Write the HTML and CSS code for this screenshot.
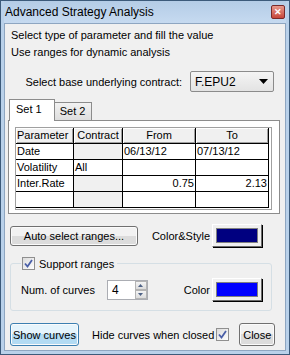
FILE: index.html
```html
<!DOCTYPE html>
<html lang="en">
<head>
    <meta charset="UTF-8">
    <title>Advanced Strategy Analysis</title>
    <link rel="stylesheet" href="styles.css">
</head>
<body>
    <div class="window">
        <div class="titlebar">
            <span class="title">Advanced Strategy Analysis</span>
            <span class="close-x">&#10005;</span>
        </div>
        <div class="client">
            <p class="intro">Select type of parameter and fill the value<br>Use ranges for dynamic analysis</p>
            <div class="contract-row">
                <span>Select base underlying contract:</span>
                <div class="combo">
                    <span>F.EPU2</span>
                    <svg width="9" height="5" viewBox="0 0 9 5"><path d="M0 0h9L4.5 5z" fill="#000"/></svg>
                </div>
            </div>
            <div class="tabs">
                <div class="tab active">Set 1</div>
                <div class="tab">Set 2</div>
            </div>
            <div class="tabpanel">
                <div class="grid-box">
                    <table class="grid">
                        <tr>
                            <th class="c1">Parameter</th>
                            <th class="c2">Contract</th>
                            <th class="c3">From</th>
                            <th class="c4">To</th>
                        </tr>
                        <tr>
                            <td>Date</td>
                            <td class="off"></td>
                            <td>06/13/12</td>
                            <td>07/13/12</td>
                        </tr>
                        <tr>
                            <td>Volatility</td>
                            <td>All</td>
                            <td></td>
                            <td></td>
                        </tr>
                        <tr>
                            <td>Inter.Rate</td>
                            <td class="off"></td>
                            <td class="num">0.75</td>
                            <td class="num">2.13</td>
                        </tr>
                        <tr>
                            <td></td>
                            <td class="off"></td>
                            <td></td>
                            <td></td>
                        </tr>
                    </table>
                </div>
            </div>
            <div class="ranges-row">
                <button class="btn auto-btn">Auto select ranges...</button>
                <span class="lbl">Color&amp;Style</span>
                <div class="swatch-btn"><div class="swatch navy"></div></div>
            </div>
            <div class="group">
                <div class="legend">
                    <span class="check"><svg width="9" height="9" viewBox="0 0 9 9"><path d="M1 4.5l2.5 3L8 1" stroke="#4a5fa8" stroke-width="1.8" fill="none"/></svg></span>
                    <span>Support ranges</span>
                </div>
                <div class="group-row">
                    <span class="lbl">Num. of curves</span>
                    <div class="spin">
                        <span class="spin-val">4</span>
                        <div class="spin-btns">
                            <div class="spin-b"><svg width="5" height="3" viewBox="0 0 5 3"><path d="M0 3h5L2.5 0z" fill="#4d6185"/></svg></div>
                            <div class="spin-b"><svg width="5" height="3" viewBox="0 0 5 3"><path d="M0 0h5L2.5 3z" fill="#4d6185"/></svg></div>
                        </div>
                    </div>
                    <span class="lbl color-lbl">Color</span>
                    <div class="swatch-btn"><div class="swatch blue"></div></div>
                </div>
            </div>
            <div class="footer">
                <button class="btn show-btn">Show curves</button>
                <span class="lbl hide-lbl">Hide curves when closed</span>
                <span class="check small"><svg width="9" height="9" viewBox="0 0 9 9"><path d="M1 4.5l2.5 3L8 1" stroke="#4a5fa8" stroke-width="1.8" fill="none"/></svg></span>
                <button class="btn close-btn">Close</button>
            </div>
        </div>
    </div>
</body>
</html>
```
FILE: styles.css
```css
body {
    margin: 0;
    padding: 0;
    background-color: #ffffff;
    font-family: "Liberation Sans", Arial, sans-serif;
    font-size: 11px;
    color: #000;
}
.window {
    width: 290px;
    height: 355px;
    box-sizing: border-box;
    border: 1px solid #3c5a7a;
    background-color: #b9d1ea;
    padding: 0 3px 3px 3px;
    display: flex;
    flex-direction: column;
}
.titlebar {
    height: 22px;
    display: flex;
    align-items: center;
    justify-content: space-between;
    padding: 0 1px 0 1px;
    background: linear-gradient(#b4cce6, #c6daf0);
}
.title {
    font-size: 12px;
    color: #000;
}
.close-x {
    width: 12px;
    height: 12px;
    border: 1px solid #7a2a2a;
    border-radius: 2px;
    background: linear-gradient(#e89a8e, #c7463a);
    color: #fff;
    font-size: 9px;
    font-weight: bold;
    line-height: 12px;
    text-align: center;
    margin-top: -1px;
}
.client {
    flex: 1;
    background-color: #f0f0f0;
    border: 1px solid #8ea6c1;
    padding: 3px 3px 0 3px;
    white-space: nowrap;
}
.intro {
    margin: 0 0 0 3px;
    line-height: 17px;
}
.contract-row {
    display: flex;
    align-items: center;
    justify-content: flex-end;
    gap: 8px;
    margin: 10px 8px 0 0;
}
.combo {
    width: 84px;
    height: 21px;
    border: 1px solid #8b8b8b;
    border-radius: 2px;
    background: linear-gradient(#f4f4f4, #e3e3e3);
    display: flex;
    align-items: center;
    justify-content: space-between;
    padding: 0 5px 0 4px;
    box-sizing: border-box;
    font-size: 12px;
}
.tabs {
    display: flex;
    align-items: flex-end;
    margin-top: 6px;
    padding-left: 1px;
    height: 22px;
}
.tab {
    border: 1px solid #8c8c8c;
    border-bottom: none;
    background: linear-gradient(#f2f2f2, #dedede);
    padding: 0 6px;
    height: 17px;
    line-height: 17px;
}
.tab.active {
    background: #fff;
    height: 21px;
    line-height: 19px;
    padding: 0 12px 0 6px;
    position: relative;
    top: 1px;
    z-index: 1;
}
.tab + .tab {
    margin-left: -1px;
    border-left: none;
}
.tabpanel {
    width: 272px;
    height: 94px;
    box-sizing: border-box;
    border: 1px solid #8c8c8c;
    background-color: #fff;
    padding: 6px 0 0 6px;
}
.grid-box {
    width: 257px;
    height: 83px;
    box-sizing: border-box;
    border: 1px solid #a0a0a0;
    background-color: #fff;
    overflow: hidden;
}
.grid {
    border-collapse: collapse;
    table-layout: fixed;
    width: 250px;
}
.grid th, .grid td {
    border: 1px solid #000;
    height: 15px;
    padding: 0 1px;
    font-weight: normal;
    text-align: left;
    line-height: 15px;
}
.grid tr:first-child th {
    border-top: none;
}
.grid tr > :first-child {
    border-left: none;
}
.grid th {
    background-color: #f0f0f0;
    text-align: center;
    box-shadow: inset 1px 1px 0 #fff, inset -1px -1px 0 #a0a0a0;
}
.grid th.c1 {
    text-align: left;
}
.c1 { width: 55px; }
.c2 { width: 46px; }
.c3 { width: 70px; }
.c4 { width: 70px; }
.grid td.off {
    background-color: #f0f0f0;
}
.grid td.num {
    text-align: right;
}
.ranges-row {
    display: flex;
    align-items: center;
    margin: 10px 0 0 2px;
}
.btn {
    font-family: "Liberation Sans", Arial, sans-serif;
    font-size: 11px;
    border: 1px solid #707070;
    border-radius: 3px;
    background: linear-gradient(#f2f2f2 50%, #dcdcdc 50%);
    color: #000;
    padding: 0;
    flex-shrink: 0;
    box-shadow: inset 0 0 0 1px #fbfbfb;
}
.auto-btn {
    width: 128px;
    height: 20px;
}
.lbl {
    white-space: nowrap;
}
.ranges-row .lbl {
    margin-left: auto;
    margin-right: 2px;
}
.ranges-row .swatch-btn {
    margin-right: 20px;
}
.swatch-btn {
    width: 50px;
    height: 23px;
    box-sizing: border-box;
    border: 1px solid;
    border-color: #fff #696969 #696969 #fff;
    box-shadow: 1px 1px 0 #000;
    background-color: #f0f0f0;
    padding: 3px;
    flex-shrink: 0;
}
.swatch {
    height: 100%;
    border: 1px solid #808080;
    box-sizing: border-box;
}
.navy { background-color: #000080; }
.blue { background-color: #0000ff; }
.group {
    margin: 16px 10px 0 2px;
    height: 46px;
    border: 1px solid #d5dfe5;
    border-radius: 3px;
    position: relative;
    padding: 0 9px 0 10px;
}
.legend {
    position: absolute;
    top: -7px;
    left: 10px;
    display: flex;
    align-items: center;
    gap: 4px;
    padding: 0 3px 0 1px;
    background-color: #f0f0f0;
}
.check {
    width: 11px;
    height: 11px;
    border: 1px solid #8f8f8f;
    background: linear-gradient(135deg, #dcdcdc, #fefefe);
    display: flex;
    align-items: center;
    justify-content: center;
    flex-shrink: 0;
}
.group-row {
    display: flex;
    align-items: center;
    margin-top: 14px;
}
.spin {
    display: flex;
    margin-left: 12px;
    width: 41px;
    height: 20px;
    border: 1px solid #abadb3;
    background: #fff;
    box-sizing: border-box;
}
.spin-val {
    flex: 1;
    font-size: 12px;
    padding: 2px 0 0 4px;
}
.spin-btns {
    width: 12px;
    display: flex;
    flex-direction: column;
}
.spin-b {
    flex: 1;
    border: 1px solid #b4b4b4;
    background: linear-gradient(#f4f4f4, #dcdcdc);
    display: flex;
    align-items: center;
    justify-content: center;
}
.color-lbl {
    margin-left: auto;
    margin-right: 2px;
}
.footer {
    display: flex;
    align-items: center;
    margin: 12px 0 0 2px;
}
.show-btn {
    width: 69px;
    height: 23px;
    border-color: #3c7fb1;
    background: linear-gradient(#e5f4fc 50%, #b3dbf3 50%);
}
.hide-lbl {
    margin-left: 13px;
}
.check.small {
    margin-left: 2px;
}
.close-btn {
    width: 36px;
    height: 23px;
    margin-left: 10px;
}
```
